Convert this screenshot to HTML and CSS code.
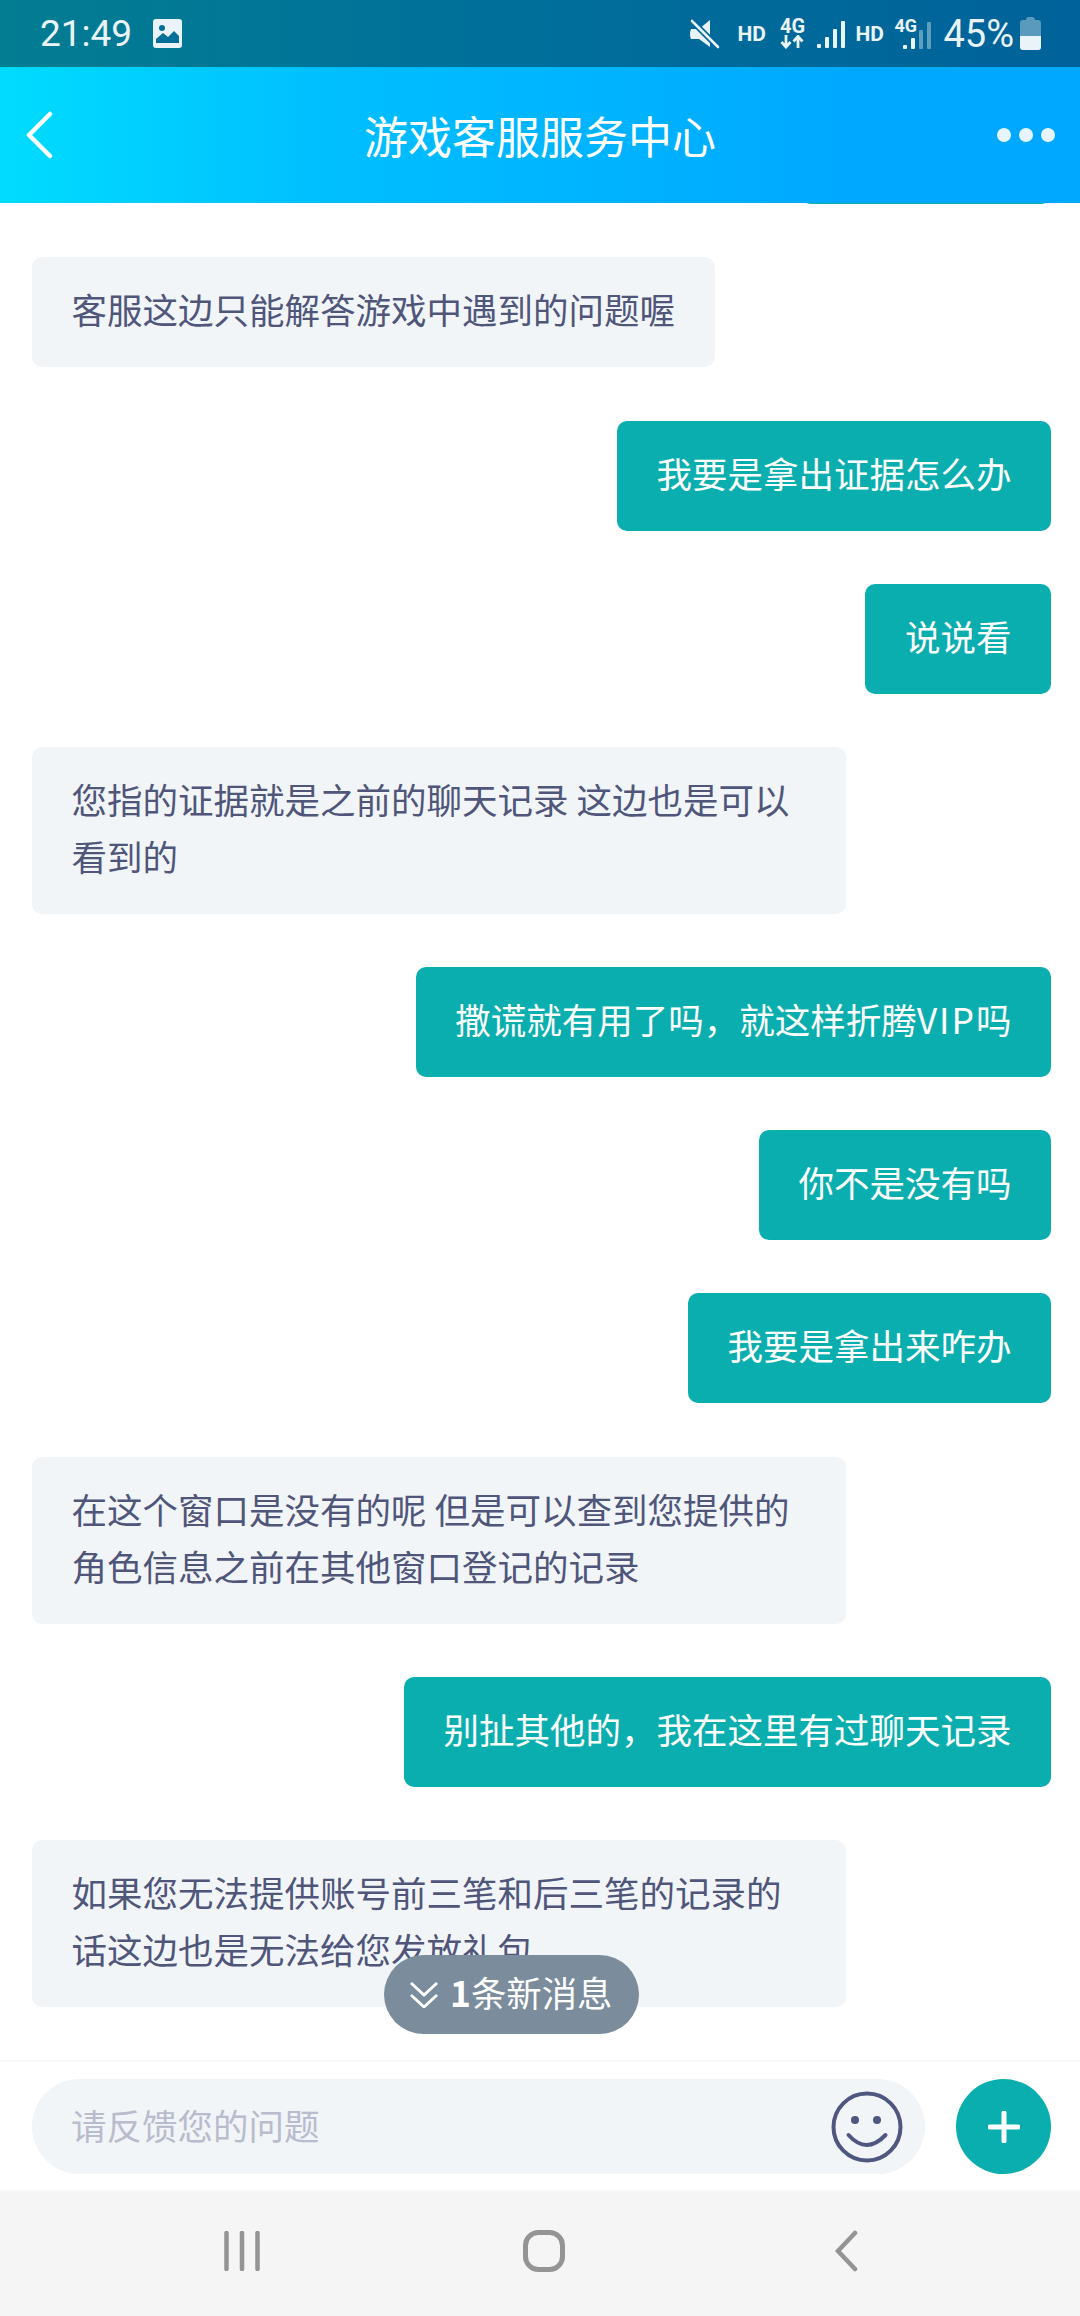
FILE: index.html
```html
<!DOCTYPE html>
<html lang="zh">
<head>
  <meta charset="utf-8">
  <title>游戏客服服务中心</title>
  <link rel="stylesheet" href="styles.css">
</head>
<body>
  <div class="phone">
    <div class="status-bar">
      <div class="status-left">
        <span class="time">21:49</span>
        <svg class="ic-picture" viewBox="0 0 29 29"><rect width="29" height="29" rx="3" fill="#eaf4f8"/><circle cx="9" cy="9" r="3" fill="#00709a"/><path d="M3 24v-4l7-6 5 4 6-6 5 5v7z" fill="#00709a"/></svg>
      </div>
      <div class="status-right">
        <svg class="ic-mute" viewBox="0 0 30 30"><path d="M1 10h8L20 1v27L9 20H1q-2-5 0-10z" fill="#eaf4f8"/><path d="M2 2l26 26" stroke="#00659a" stroke-width="6"/><path d="M2 2l26 26" stroke="#eaf4f8" stroke-width="2.600" stroke-linecap="round"/></svg>
        <span class="hd">HD</span>
        <div class="net">
          <span class="net-label">4G</span>
          <svg class="ic-arrows" viewBox="0 0 24 14"><path d="M6 0v11M1.500 7l4.500 5 4.500-5M18 13V2M13.500 6.500L18 1.500l4.500 5" fill="none" stroke="#eaf4f8" stroke-width="2.800"/></svg>
        </div>
        <svg class="ic-signal" viewBox="0 0 28 28"><rect x="0" y="23" width="4" height="4" rx="1" fill="#eaf4f8"/><rect x="8" y="16" width="4" height="11" rx="1" fill="#eaf4f8"/><rect x="16" y="8" width="4" height="19" rx="1" fill="#eaf4f8"/><rect x="24" y="0" width="4" height="27" rx="1" fill="#eaf4f8"/></svg>
        <span class="hd">HD</span>
        <div class="sim2">
          <span class="net-label small">4G</span>
          <svg class="ic-signal2" viewBox="0 0 28 28"><rect x="0" y="23" width="4" height="4" rx="1" fill="#eaf4f8"/><rect x="8" y="16" width="4" height="11" rx="1" fill="#eaf4f8"/><rect x="16" y="8" width="4" height="19" rx="1" fill="#eaf4f8" fill-opacity=".4"/><rect x="24" y="0" width="4" height="27" rx="1" fill="#eaf4f8" fill-opacity=".4"/></svg>
        </div>
        <span class="battery-text">45%</span>
        <svg class="ic-battery" viewBox="0 0 21 33"><path d="M6 3q0-3 3-3h3q3 0 3 3h3q3 0 3 3v24q0 3-3 3H3q-3 0-3-3V6q0-3 3-3z" fill="#eaf4f8" fill-opacity=".38"/><path d="M0 19h21v11q0 3-3 3H3q-3 0-3-3z" fill="#eaf4f8"/></svg>
      </div>
    </div>

    <div class="title-bar">
      <svg class="ic-back" viewBox="0 0 28 48"><path d="M25 3L4 24l21 21" fill="none" stroke="#fff" stroke-width="4.500" stroke-linecap="round" stroke-linejoin="round"/></svg>
      <h1 class="title">游戏客服服务中心</h1>
      <div class="more"><i></i><i></i><i></i></div>
    </div>

    <div class="chat">
      <div class="bubble me clipped"></div>
      <div class="bubble them">客服这边只能解答游戏中遇到的问题喔</div>
      <div class="bubble me">我要是拿出证据怎么办</div>
      <div class="bubble me">说说看</div>
      <div class="bubble them">您指的证据就是之前的聊天记录 这边也是可以看到的</div>
      <div class="bubble me">撒谎就有用了吗，就这样折腾<span class="latin">VIP</span>吗</div>
      <div class="bubble me">你不是没有吗</div>
      <div class="bubble me">我要是拿出来咋办</div>
      <div class="bubble them">在这个窗口是没有的呢 但是可以查到您提供的角色信息之前在其他窗口登记的记录</div>
      <div class="bubble me">别扯其他的，我在这里有过聊天记录</div>
      <div class="bubble them">如果您无法提供账号前三笔和后三笔的记录的话这边也是无法给您发放礼包</div>
      <div class="new-msg">
        <svg class="ic-down" viewBox="0 0 28 26"><path d="M1 1l13 12L27 1M1 13l13 12 13-12" fill="none" stroke="#fff" stroke-width="2.800"/></svg>
        <span class="new-msg-text"><b>1</b>条新消息</span>
      </div>
    </div>

    <div class="composer">
      <div class="input-pill">
        <span class="placeholder">请反馈您的问题</span>
        <svg class="ic-smile" viewBox="0 0 72 72"><circle cx="36" cy="36" r="33.500" fill="none" stroke="#4f5680" stroke-width="4"/><circle cx="24" cy="29" r="4" fill="#4f5680"/><circle cx="46" cy="29" r="4" fill="#4f5680"/><path d="M17.500 44q18 20 37 0" fill="none" stroke="#4f5680" stroke-width="4" stroke-linecap="round"/></svg>
      </div>
      <div class="add-btn">
        <svg class="ic-plus" viewBox="0 0 32 32"><path d="M16 2v28M2 16h28" stroke="#fff" stroke-width="5" stroke-linecap="round"/></svg>
      </div>
    </div>

    <div class="nav-bar">
      <svg class="ic-recents" viewBox="0 0 36 40"><path d="M2.500 2v36M18 2v36M33.500 2v36" stroke="#949494" stroke-width="4.500" stroke-linecap="round"/></svg>
      <svg class="ic-home" viewBox="0 0 42 42"><rect x="2.500" y="2.500" width="37" height="37" rx="13" fill="none" stroke="#949494" stroke-width="5"/></svg>
      <svg class="ic-navback" viewBox="0 0 24 42"><path d="M21 3L4 21l17 18" fill="none" stroke="#949494" stroke-width="4.500" stroke-linecap="round"/></svg>
    </div>
  </div>
</body>
</html>
```

FILE: styles.css
```css
* {
  box-sizing: border-box;
}
html, body {
  margin: 0;
  padding: 0;
  background: #fff;
}
.phone {
  width: 1080px;
  height: 2316px;
  display: flex;
  flex-direction: column;
  overflow: hidden;
  font-family: "Noto Sans CJK SC", "Noto Sans", sans-serif;
}

/* status bar */
.status-bar {
  height: 67px;
  flex: none;
  display: flex;
  justify-content: space-between;
  align-items: center;
  padding: 0 39px 0 40px;
  background: linear-gradient(to right, #037d92, #00709a 45%, #00629a);
  color: #eaf4f8;
}
.status-left, .status-right {
  display: flex;
  align-items: center;
}
.time {
  font-family: Roboto, sans-serif;
  font-size: 37px;
  line-height: 40px;
  margin-right: 21px;
}
.ic-picture {
  width: 29px;
  height: 29px;
}
.ic-mute {
  width: 30px;
  height: 30px;
  margin-right: 17px;
}
.hd {
  font-family: Roboto, sans-serif;
  font-weight: 700;
  font-size: 21px;
  width: 27px;
}
.net {
  width: 24px;
  margin: 0 13px 0 16px;
  display: flex;
  flex-direction: column;
  align-items: center;
}
.net-label {
  font-family: Roboto, sans-serif;
  font-weight: 700;
  font-size: 20px;
  line-height: 17px;
}
.net-label.small {
  position: absolute;
  left: 0;
  top: 0;
  font-size: 18px;
  line-height: 15px;
}
.ic-arrows {
  width: 24px;
  height: 14px;
}
.ic-signal {
  width: 28px;
  height: 28px;
  margin-right: 10px;
  margin-top: 3px;
}
.sim2 {
  position: relative;
  width: 37px;
  height: 32px;
  margin-left: 12px;
  display: flex;
  justify-content: flex-end;
  align-items: flex-end;
}
.ic-signal2 {
  width: 28px;
  height: 28px;
}
.battery-text {
  font-family: Roboto, sans-serif;
  font-size: 38px;
  line-height: 40px;
  margin-left: 12px;
  margin-right: 6px;
}
.ic-battery {
  width: 21px;
  height: 33px;
}

/* title bar */
.title-bar {
  height: 136px;
  flex: none;
  display: grid;
  grid-template-columns: 1fr auto 1fr;
  align-items: center;
  padding: 0 25px;
  background: linear-gradient(to right, #00dcff, #00bfff 30%, #00a8ff 80%);
  color: #fff;
}
.ic-back {
  width: 28px;
  height: 48px;
}
.title {
  margin: 0;
  font-size: 44px;
  font-weight: 400;
  line-height: 60px;
}
.more {
  justify-self: end;
  display: flex;
  gap: 8px;
}
.more i {
  display: block;
  width: 14px;
  height: 14px;
  border-radius: 50%;
  background: #e6f5ff;
}

/* messages */
.chat {
  flex: 1;
  position: relative;
  min-height: 0;
  overflow: hidden;
  display: flex;
  flex-direction: column;
  justify-content: flex-end;
  gap: 53.200px;
  padding: 0 29px 53px 32px;
}
.bubble {
  flex: none;
  max-width: 814px;
  padding: 23px 39.500px 30px;
  border-radius: 10px;
  font-size: 35.500px;
  line-height: 57px;
}
.bubble.them {
  align-self: flex-start;
  background: #f1f5f8;
  color: #50567a;
}
.bubble.me {
  align-self: flex-end;
  background: #0aaeae;
  color: #fff;
}
.bubble.clipped {
  width: 250px;
  height: 110px;
}
.latin {
  letter-spacing: 2px;
}
.new-msg {
  position: absolute;
  left: 384px;
  bottom: 26px;
  width: 255px;
  height: 79px;
  border-radius: 40px;
  background: #7b8c9c;
  color: #fff;
  display: flex;
  align-items: center;
  padding-left: 26px;
}
.ic-down {
  width: 28px;
  height: 26px;
  margin-right: 12px;
}
.new-msg-text {
  font-size: 35.400px;
  line-height: 50px;
  margin-bottom: 6px;
}

/* input row */
.composer {
  height: 130px;
  flex: none;
  display: flex;
  justify-content: space-between;
  border-top: 2px solid #f7f7f8;
  padding: 17px 29px 0 32px;
}
.input-pill {
  width: 893px;
  height: 95px;
  border-radius: 48px;
  background: #f1f5f8;
  display: flex;
  justify-content: space-between;
  align-items: center;
  padding: 0 22px 0 39px;
}
.placeholder {
  font-size: 35.500px;
  color: #b9bccc;
  margin-bottom: 5px;
}
.ic-smile {
  width: 72px;
  height: 72px;
}
.add-btn {
  width: 95px;
  height: 95px;
  border-radius: 50%;
  background: #0aaeae;
  display: flex;
  justify-content: center;
  align-items: center;
}
.ic-plus {
  width: 32px;
  height: 32px;
}

/* android nav */
.nav-bar {
  height: 126px;
  flex: none;
  background: #f5f5f5;
  display: flex;
  align-items: center;
  justify-content: space-between;
  padding: 0 222px 4px 224px;
}
.ic-recents {
  width: 36px;
  height: 40px;
}
.ic-home {
  width: 42px;
  height: 42px;
  margin-right: 6px;
}
.ic-navback {
  width: 24px;
  height: 42px;
}
```
